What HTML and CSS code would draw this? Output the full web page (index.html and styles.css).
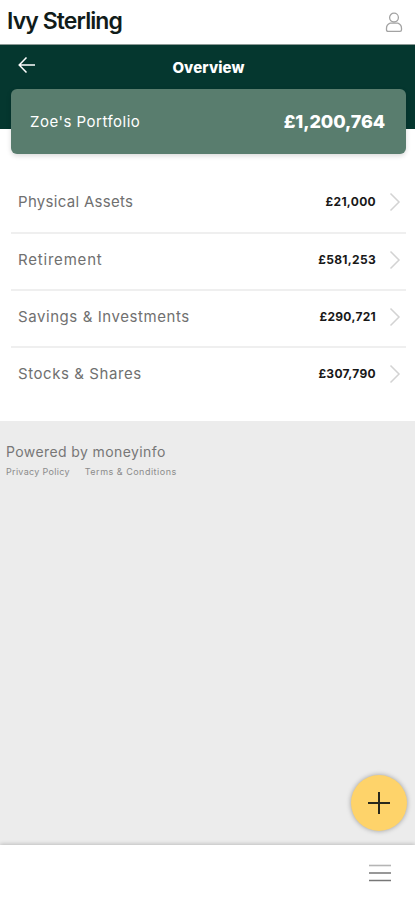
FILE: index.html
```
<!DOCTYPE html>
<html lang="en">
<head>
    <meta charset="UTF-8">
    <meta name="viewport" content="width=device-width, initial-scale=1.0">
    <title>Ivy Sterling - Overview</title>
    <link rel="stylesheet" href="styles.css">
</head>
<body>
    <div class="topbar">
        <div class="logo">Ivy Sterling</div>
        <svg class="user-icon" width="18" height="21" viewBox="0 0 18 21">
            <circle cx="9" cy="5.6" r="4.4"/>
            <path d="M5.2 11.2h7.6q3.7 1.3 3.7 5v1.6q0 1.6-1.6 1.6H3.1q-1.6 0-1.6-1.6v-1.6q0-3.7 3.7-5z"/>
        </svg>
    </div>

    <div class="header">
        <div class="title-row">
            <svg class="back-icon" width="18" height="18" viewBox="0 0 18 18">
                <path d="M17 9H1.5M8.5 1.5L1.2 9l7.3 7.5"/>
            </svg>
            <h1>Overview</h1>
        </div>
        <div class="portfolio">
            <span class="portfolio-name">Zoe's Portfolio</span>
            <span class="portfolio-total">£1,200,764</span>
        </div>
    </div>

    <div class="list">
        <div class="row">
            <span class="label physical">Physical Assets</span>
            <span class="amount">£21,000</span>
            <svg class="chevron" width="12" height="20" viewBox="0 0 12 20"><path d="M1.5 1.5L10 10l-8.5 8.5"/></svg>
        </div>
        <div class="row">
            <span class="label retirement">Retirement</span>
            <span class="amount">£581,253</span>
            <svg class="chevron" width="12" height="20" viewBox="0 0 12 20"><path d="M1.5 1.5L10 10l-8.5 8.5"/></svg>
        </div>
        <div class="row">
            <span class="label">Savings &amp; Investments</span>
            <span class="amount">£290,721</span>
            <svg class="chevron" width="12" height="20" viewBox="0 0 12 20"><path d="M1.5 1.5L10 10l-8.5 8.5"/></svg>
        </div>
        <div class="row">
            <span class="label">Stocks &amp; Shares</span>
            <span class="amount">£307,790</span>
            <svg class="chevron" width="12" height="20" viewBox="0 0 12 20"><path d="M1.5 1.5L10 10l-8.5 8.5"/></svg>
        </div>
    </div>

    <div class="footer">
        <div class="powered">Powered by moneyinfo</div>
        <div class="links">
            <a>Privacy Policy</a>
            <a class="terms">Terms &amp; Conditions</a>
        </div>
    </div>

    <button class="add-btn" aria-label="Add">
        <svg width="24" height="24" viewBox="0 0 24 24"><path d="M12 1v22M1 12h22"/></svg>
    </button>

    <div class="bottom-nav">
        <svg class="menu-icon" width="22" height="18" viewBox="0 0 22 18">
            <path class="menu-top" d="M0 1.5h22"/>
            <path d="M0 9h22M0 16.5h22"/>
        </svg>
    </div>
</body>
</html>
```

FILE: styles.css
```
* {
    box-sizing: border-box;
}
body {
    margin: 0;
    height: 900px;
    display: flex;
    flex-direction: column;
    position: relative;
    overflow: hidden;
    background-color: #ececec;
    font-family: Inter, "Liberation Sans", sans-serif;
}
.topbar {
    height: 45px;
    flex: none;
    display: flex;
    justify-content: space-between;
    align-items: flex-start;
    padding: 12px 12px 0 7px;
    background-color: white;
    border-bottom: 1px solid #8b9995;
}
.logo {
    margin-top: -5px;
    font-size: 23px;
    line-height: 28px;
    font-weight: 600;
    letter-spacing: -0.9px;
    color: #111c1a;
}
.user-icon {
    fill: none;
    stroke: #a3a3a3;
    stroke-width: 1.3;
}
.header {
    position: relative;
    z-index: 1;
    height: 84px;
    flex: none;
    padding: 0 9px 0 11px;
    background-color: #05372f;
}
.title-row {
    height: 44px;
    display: grid;
    grid-template-columns: 60px 1fr 60px;
    align-items: center;
}
.back-icon {
    margin: -5px 0 0 7px;
    fill: none;
    stroke: white;
    stroke-width: 1.5;
}
h1 {
    margin: 1px 0 0;
    text-align: center;
    font-size: 15px;
    font-weight: 800;
    letter-spacing: 0.1px;
    color: white;
}
.portfolio {
    height: 65px;
    display: flex;
    justify-content: space-between;
    align-items: center;
    padding: 0 21px 0 19px;
    background-color: #597d6e;
    border-radius: 6px;
    box-shadow: 0 2px 5px rgba(0,0,0,0.15);
    color: white;
}
.portfolio-name {
    font-size: 15px;
    letter-spacing: 0.5px;
}
.portfolio-total {
    font-size: 18px;
    font-weight: 800;
    letter-spacing: -0.1px;
}
.list {
    height: 292px;
    flex: none;
    padding: 47px 9px 0 11px;
    background-color: white;
}
.row {
    height: 57px;
    display: flex;
    align-items: center;
    padding: 0 5px 3px 7px;
    border-bottom: 2px solid #efefef;
}
.row:first-child {
    height: 58px;
    padding-bottom: 5px;
}
.row:last-child {
    padding-bottom: 5px;
    border-bottom: none;
}
.label {
    flex: 1;
    font-size: 15px;
    letter-spacing: 0.57px;
    color: #707070;
}
.row + .row .label,
.row + .row .amount {
    padding-bottom: 2px;
}
.label.physical {
    letter-spacing: 0.3px;
}
.label.retirement {
    letter-spacing: 0.8px;
}
.amount {
    font-size: 12px;
    font-weight: 700;
    letter-spacing: 0.3px;
    color: #181818;
}
.chevron {
    margin-left: 13px;
    fill: none;
    stroke: #d3d3d3;
    stroke-width: 1.5;
}
.footer {
    padding: 21px 6px;
    color: #777;
}
.powered {
    font-size: 14px;
    line-height: 20px;
    letter-spacing: 0.4px;
}
.links {
    display: flex;
    gap: 15px;
    font-size: 9px;
    line-height: 20px;
    letter-spacing: 0.3px;
    color: #8b8b8b;
}
.terms {
    letter-spacing: 0.5px;
}
.add-btn {
    position: absolute;
    right: 8px;
    bottom: 69px;
    width: 56px;
    height: 56px;
    display: flex;
    align-items: center;
    justify-content: center;
    padding: 0;
    background-color: #fed36a;
    border: none;
    border-radius: 50%;
    box-shadow: 0 0 5px rgba(0,0,0,0.35);
}
.add-btn svg {
    fill: none;
    stroke: #28281c;
    stroke-width: 2;
}
.bottom-nav {
    height: 55px;
    flex: none;
    margin-top: auto;
    display: flex;
    justify-content: flex-end;
    padding: 19px 24px 0 0;
    background-color: white;
    box-shadow: 0 -1px 4px rgba(0,0,0,0.2);
}
.menu-icon {
    fill: none;
    stroke: #777;
    stroke-width: 1.6;
}
.menu-top {
    stroke: #b5b5b5;
}
```
